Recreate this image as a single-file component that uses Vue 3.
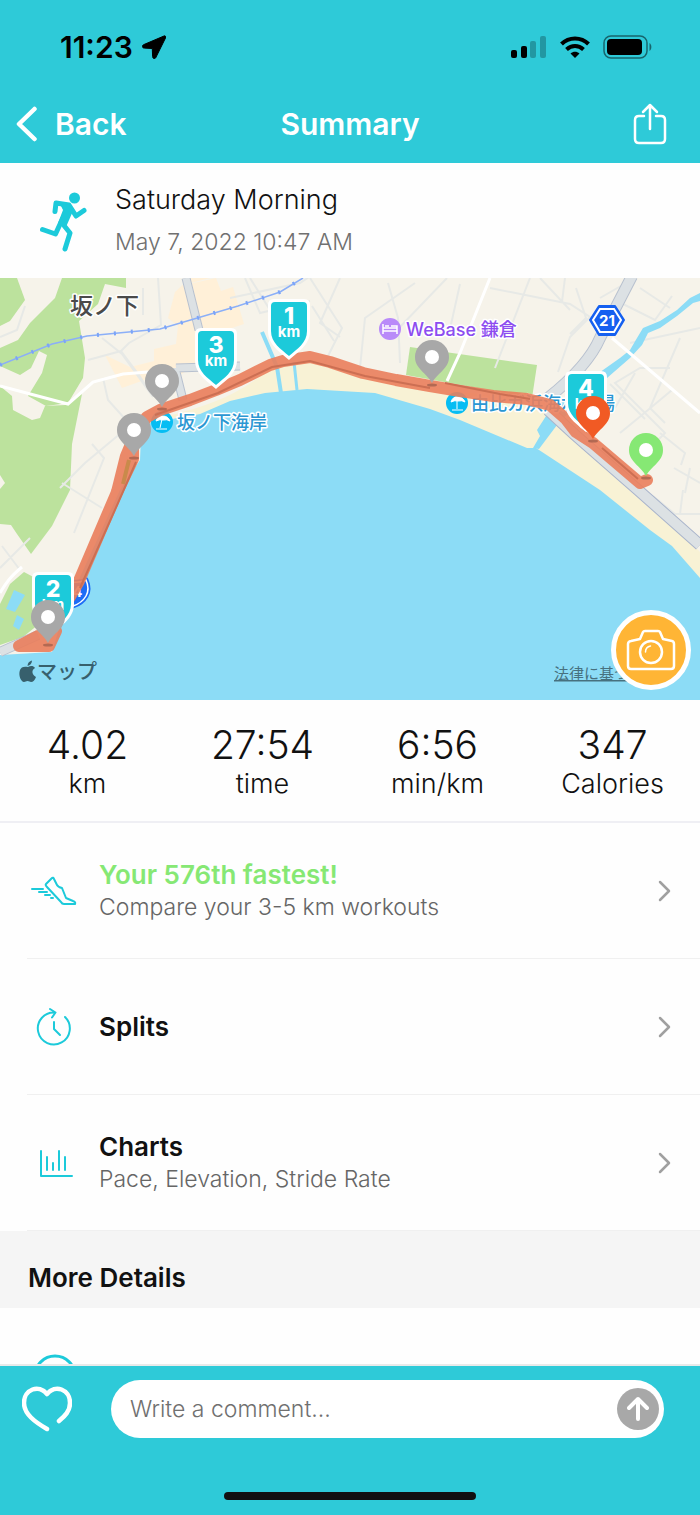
<template>
  <div class="app">
    <header class="header">
      <div class="status-bar">
        <div class="status-time">
          <span>11:23</span>
          <svg width="24" height="24" viewBox="0 0 24 24" aria-hidden="true">
            <path d="M22 1 2 9.500c-2.500 1-2 3.500.3 3.600l8 .4.3 8c.1 2.500 2.600 3 3.500.5L23.500 3c.5-1.500-.3-2.500-1.500-2z" stroke="#000" stroke-width="1" />
          </svg>
        </div>
        <div class="status-icons">
          <svg width="36" height="24" viewBox="0 0 36 24" aria-hidden="true">
            <rect x="0" y="15" width="6" height="8" rx="2" />
            <rect x="10" y="11" width="6" height="12" rx="2" />
            <rect x="19" y="6" width="6" height="17" rx="2" opacity=".25" />
            <rect x="29" y="1" width="6" height="22" rx="2" opacity=".25" />
          </svg>
          <svg width="30" height="24" viewBox="0 0 30 24" aria-hidden="true">
            <g fill="none" stroke="#000" stroke-width="4">
              <path d="M1.500 9C9 1.500 21 1.500 28.500 9" />
              <path d="M6.500 14.500c5-4.600 12-4.600 17 0" />
            </g>
            <path d="M10.500 18.500c2.800-2.300 6.200-2.300 9 0L15 23z" />
          </svg>
          <svg width="50" height="24" viewBox="0 0 50 24" aria-hidden="true">
            <rect x="1" y="1" width="43" height="22" rx="7" fill="none" stroke="#000" stroke-opacity=".5" stroke-width="1.500" />
            <rect x="4" y="4" width="35" height="16" rx="4" />
            <path d="M46.500 8c2.500 1.500 2.500 6.500 0 8z" opacity=".5" />
          </svg>
        </div>
      </div>
      <nav class="nav-bar">
        <button class="back" type="button">
          <svg width="22" height="36" viewBox="0 0 22 36" aria-hidden="true">
            <path d="M18.500 3 3 18l15.500 15" fill="none" stroke="#fff" stroke-width="4.500" stroke-linecap="round" stroke-linejoin="round" />
          </svg>
          <span>Back</span>
        </button>
        <h1>Summary</h1>
        <button class="share" type="button" aria-label="Share">
          <svg width="34" height="42" viewBox="0 0 34 42" aria-hidden="true">
            <g fill="none" stroke="#fff" stroke-width="2.500" stroke-linecap="round" stroke-linejoin="round">
              <path d="M11 13H6q-4 0-4 4v19q0 4 4 4h22q4 0 4-4V17q0-4-4-4h-5M17 26V2M10 9l7-7 7 7" />
            </g>
          </svg>
        </button>
      </nav>
    </header>

    <main class="content">
      <section class="workout">
        <svg class="runner" width="50" height="62" viewBox="0 0 50 62" aria-hidden="true">
          <circle cx="35.500" cy="8" r="5.500" fill="#1ccada" />
          <g fill="none" stroke="#1ccada" stroke-width="5" stroke-linecap="round" stroke-linejoin="round">
            <path d="M16 21.500 17 13l13 2 7 11 8-5.500" />
            <path d="m3.500 39.500 13 4.500 6-13 7-14" />
            <path d="m23 33 8 10-5 16" />
          </g>
          <path d="m21 14 9 1 4 6-7 16-8-4 5-13z" fill="#1ccada" />
        </svg>
        <div>
          <h2>Saturday Morning</h2>
          <p>May 7, 2022 10:47 AM</p>
        </div>
      </section>

      <section class="map" aria-label="Route map">
        <svg class="map-canvas" viewBox="0 0 700 422" preserveAspectRatio="xMidYMid slice">
          <rect width="700" height="422" fill="#f6f3ea" />

          <!-- built-up blocks -->
          <g fill="#fff0d8">
            <path d="m180 8 30-8h-20l-15 14-7 26 10 8-2 18-22 5v12l-24 6-25-12 17 33 28-10 27-1 20-13 30-6-7-26 24-8-11-37-12 4-5-13z" />
          </g>

          <!-- parks and hills -->
          <g fill="#bce29d">
            <path d="M0 0h17l8 22-15 21-10 5z" />
            <path d="M62 0h64v10l-21-4-7 20-19 17 6 37-2 20-15 25-22 3-18-10 14-23 5-18-8-4-8 17-11 7-20-9V70l18-8 12-17 25-25z" />
            <path d="m0 108 12 10 1 14 19 10 8-2 5-12 20-1 17-11-10 50-2 46-18 36-21 28-14-20-6-9-12-1z" />
            <path d="m0 326 10-20 14-12 15 8v44l-16 13-23 8z" />
            <path d="m410 69 127 18-5 33-126-23z" />
            <path d="m0 197 5 8-5 6z" fill="#f6f3ea" />
          </g>

          <!-- small streets -->
          <g fill="none" stroke="#e7e9e6" stroke-width="2">
            <path d="m88 82 33-9 8-8 32-18-3-47M121 73l18 24 14 22M102 60l20 16 31 43M103 100l5 22 18 20M60 210l25-25 42-35M92 166l12 14-30 75M62 205l40 25M25 28l-8 24-17 7M143 10v27M0 290l30-30M2 268l18 24M230 20l70-15 30-20M245 0l15 35 50-12M250 0l25 40 20 35M310 0l32 50-20 40M360 90l5-50 50-35M400 85l-2-45-10-35M447 0l-48 50M340 0l-20 45 20 14M312 28l22 35" />
            <path d="m490 10 80 16 20 13-20 20-12 35M530 0l-35 90M460 6l-10 45M540 0l30 32M565 0l-3 24M615 22l40 20 17-24M640 10l30 20M670 90h-30l-25 15 50 50-20 20M700 50l-70 15M680 60l-30 70 15 15M610 106l35 35M620 155l22-18 30-25M660 155l25 20-4 12M635 95l-20 35M674 190l26 15M690 190l-5 25M700 236h-25l-22-18M683 212l-3 24M576 10l10 30-16 16M600 20l35-20" />
          </g>

          <!-- main roads -->
          <g fill="none" stroke="#b8c1cf" stroke-width="9">
            <path d="m186 0 13 52M183 122l-8-32M176 90l64-2" />
            <path d="m632 -2-32 62q-12 28-52 60" stroke-width="12" />
          </g>
          <g fill="none" stroke="#dce1e4" stroke-width="7">
            <path d="m186 0 13 52M183 122l-8-32M176 90l64-2" />
            <path d="m632 -2-32 62q-12 28-52 60" stroke-width="10" />
          </g>

          <!-- beach, sea and river -->
          <path d="M168 138c40-10 72-21 102-48l38-8 52 12 60 14 60 8 65 14 22 26 85 68 48 50v32z" fill="#f8f2d5" />
          <path d="M0 377 52 374l12-40 56-122 20-30 1-25 14-18 17 2 28-5 30-13 35-8 42-4 68 4 55 16 30 11 67 28h9l64 42 50 40 22 16 28 32v122H0z" fill="#8cdcf6" />
          <path d="M700 15 690 20 677 32 660 43 643 50 637 60 630 72 620 80 603 92 548 135 537 152 540 158 533 170 539 171 560 143 607 100 630 80 642 67 648 55 660 50 677 38 693 25 700 23z" fill="#8cdcf6" />
          <g fill="none" stroke="#8cdcf6">
            <path d="m262 54 15 35 4 26" stroke-width="4" />
            <path d="m294 84 3 28" stroke-width="3" />
          </g>
          <g fill="none" stroke="#fff" stroke-width="3">
            <path d="m0 108 68 18 25-22 30-8 25-2M0 315c6-10 10-16 22-26M490 0l-30 75-13 28" />
            <path d="m612 60 88 75" />
          </g>
          <path d="m548 132 26 24 64 56 62 55" fill="none" stroke="#a9b4cb" stroke-width="12" />
          <path d="m548 132 26 24 64 56 62 55" fill="none" stroke="#dce1e4" stroke-width="10" />
          <path d="m14 312 11 5-10 17-9-3zm3 25 7 4-5 11-6-4z" fill="#8cdcf6" />
          <path d="m0 374 38-17" stroke="#b8c1cf" stroke-width="10" />
          <path d="m0 374 38-17" stroke="#dce1e4" stroke-width="8" />

          <!-- railway -->
          <path d="m0 87 52-21 35-8 73-7 78-23 42-14 23-14" fill="none" stroke="#8baff8" stroke-width="1.500" />
          <path d="m0 87 52-21 35-8 73-7 78-23 42-14 23-14" fill="none" stroke="#7ba4f8" stroke-width="4" stroke-dasharray="2 15" />

          <!-- place names -->
          <text x="70" y="36" class="label town">坂ノ下</text>
          <circle cx="162" cy="144" r="11" fill="#06bdf3" />
          <path d="m156 143q2-6 7-5 5 0 7 5-3-2-7-1-3-1-7 1zm6-2-2 9m-4 1h11" class="parasol" />
          <text x="177" y="151" class="label beach">坂ノ下海岸</text>
          <circle cx="457" cy="125" r="11" fill="#06bdf3" />
          <path d="m451 124q2-6 7-5 5 0 7 5-3-2-7-1-3-1-7 1zm6-2v9m-5 1h11" class="parasol" />
          <text x="471" y="132" class="label beach">由比ガ浜海水浴場</text>
          <circle cx="390" cy="51" r="11" fill="#b98af9" />
          <path d="M383 46v10m0-3h14v3m0-3v-3h-14m2-2h4m2 0h6v3" fill="none" stroke="#fff" stroke-width="1.500" />
          <text x="406" y="58" class="label hotel">WeBase 鎌倉</text>
          <path d="M72 304q9 1 14-2 4 9 0 16-4 7-13 10l-9-11z" fill="#1e6df6" stroke="#1e6df6" stroke-width="5" stroke-linejoin="round" />
          <path d="M72 304q9 1 14-2 4 9 0 16-4 7-13 10l-9-11z" fill="#1e6df6" stroke="#fff" stroke-width="1.500" />
          <text x="56" y="319" class="shield">134</text>
          <path d="m599 28h16l9 14-9 15h-16l-9-15z" fill="#1560f0" stroke="#1560f0" stroke-width="2" stroke-linejoin="round" />
          <path d="m600 31h14l7 11-7 12h-14l-7-12z" fill="#1560f0" stroke="#fff" stroke-width="2" />
          <text x="607" y="48" class="shield middle">21</text>

          <!-- recorded route -->
          <g opacity=".9" fill="none" stroke="#ea7e5c" stroke-width="12" stroke-linecap="round" stroke-linejoin="round">
            <path d="M50 362 60 336 79 303 117 214 126 178 137 152 147 139 160 132 190 122 216 112 240 102 270 87 283 83 310 79 330 84 363 95 396 102 430 108 460 113 493 118 527 121 550 127 566 141 576 154 593 165 640 205 647 202" />
            <path d="M133 166v15l-16 33" />
            <path d="M19 368 38 358 56 353 49 368z" fill="#ea7e5c" />
          </g>
          <g fill="none" stroke="#cc6f53" stroke-width="2">
            <path d="M80 310 118 225 136 184M155 137 218 115 272 89 310 83 365 98 430 110M445 105 500 116 530 121M602 170 638 201" />
            <path d="m123 206 6-24" stroke="#c98a4b" stroke-width="4" />
          </g>

          <g v-for="badge in badges" :key="badge.km" :transform="`translate(${badge.x} ${badge.y})`">
            <path d="M-15 0h30q6 0 6 6v26C21 46 9 53 0 61-9 53-21 46-21 32V6q0-6 6-6z" fill="#fff" />
            <path d="M-14 3h28q4 0 4 4v25C18 44 8 50 0 57c-8-7-18-13-18-25V7q0-4 4-4z" fill="#1ccada" />
            <text y="25" class="km-number">{{ badge.km }}</text>
            <text y="38" class="km-unit">km</text>
          </g>

          <g v-for="pin in pins" :key="pin.id" :transform="`translate(${pin.x} ${pin.y})`">
            <ellipse cy="28" rx="5" ry="1.500" fill="#8d5443" opacity=".6" />
            <path d="M0 26C-5 16-17 12-17 0a17 17 0 0 1 34 0C17 12 5 16 0 26z" :fill="pin.color" />
            <circle r="7" fill="#fff" />
          </g>

          <!-- map credits -->
          <g fill="#37606d">
            <path d="M28 389c2-1 5-2 7 1-4 2-3 7 1 9-1 3-3 5-5 5-1 0-2-1-3.500-1s-2 1-3.500 1c-3 0-6-7-4-12 1-3 4-4 8-3z" />
            <path d="M27.500 388c0-3 2-5 4.500-5.500 0 3-2 5-4.500 5.500z" />
            <text x="37" y="401" class="credit">マップ</text>
          </g>
          <text x="554" y="401" class="legal">法律に基づく</text>
        </svg>
        <button class="camera" type="button" aria-label="Add photo">
          <svg width="50" height="42" viewBox="0 0 50 42" aria-hidden="true">
            <g fill="none" stroke="#fff" stroke-width="2.500" stroke-linejoin="round">
              <path d="M14 10 17 3q.5-1 2-1h13q1.500 0 2 1l3 7 9 2q2 .5 2 3v22q0 3-3 3H5q-3 0-3-3V15q0-2.500 3-3z" />
              <circle cx="25" cy="23" r="11" />
              <path d="M19.500 23q0-5 5-6" stroke-width="1.500" stroke-linecap="round" />
            </g>
          </svg>
        </button>
      </section>

      <dl class="stats">
        <div v-for="stat in stats" :key="stat.label">
          <dd>{{ stat.value }}</dd>
          <dt>{{ stat.label }}</dt>
        </div>
      </dl>

      <div class="rows">
        <button v-for="row in rows" :key="row.icon" class="row" type="button">
          <span class="row-inner">
            <svg class="row-icon" width="50" height="42" viewBox="0 0 50 42" aria-hidden="true">
              <g v-if="row.icon === 'shoe'">
                <path d="m17 14 6-6q1-1 2 1l3 6q1 2 5 3l4 10 7 3q3 1 2 3H35q-2 0-3-2L18 17q-2-2-1-3z" />
                <path d="M3 19h11M10 22h8M16 25h5M22 28h2" />
              </g>
              <g v-else-if="row.icon === 'clock'">
                <path d="M36 11A16 16 0 1 1 26 6.500M21 3l5.500 3.500-3.500 5" />
                <path d="M25 16v7l6 6" />
              </g>
              <g v-else>
                <path d="M12 9v25h31M18 15v13M24 21v7M30 9v19M36 15v13" />
              </g>
            </svg>
            <span class="row-text">
              <span class="row-title" :class="{ highlight: row.highlight }">{{ row.title }}</span>
              <span v-if="row.subtitle" class="row-subtitle">{{ row.subtitle }}</span>
            </span>
            <svg width="14" height="22" viewBox="0 0 14 22" aria-hidden="true">
              <path d="m2 2 9 9-9 9" fill="none" stroke="#a0a0a0" stroke-width="2.500" stroke-linecap="round" stroke-linejoin="round" />
            </svg>
          </span>
        </button>
      </div>

      <h3 class="section-title">More Details</h3>
      <div class="detail">
        <svg width="44" height="44" viewBox="0 0 44 44" aria-hidden="true">
          <circle cx="22" cy="22" r="20" fill="none" stroke="#1ccada" stroke-width="3" />
        </svg>
      </div>
    </main>

    <footer class="footer">
      <form class="comment-form" @submit.prevent="comment = ''">
        <button class="like" type="button" aria-label="Like">
          <svg width="50" height="46" viewBox="0 0 50 46" aria-hidden="true">
            <path d="M25 43C13 36 2 28 2 17 2 3 17-2 25 8c8-10 23-5 23 9 0 8-5 13-11 18" fill="none" stroke="#fff" stroke-width="4.500" stroke-linecap="round" stroke-linejoin="round" />
          </svg>
        </button>
        <div class="comment-box">
          <input v-model="comment" type="text" placeholder="Write a comment..." aria-label="Write a comment" />
          <button class="send" type="submit" aria-label="Send">
            <svg width="22" height="26" viewBox="0 0 22 26" aria-hidden="true">
              <path d="M11 23V3M2 12l9-9 9 9" fill="none" stroke="#fff" stroke-width="4" stroke-linecap="round" stroke-linejoin="round" />
            </svg>
          </button>
        </div>
      </form>
      <div class="home-indicator"></div>
    </footer>
  </div>
</template>

<script setup>
import { ref } from 'vue'

const comment = ref('')

const badges = [
  { km: 1, x: 289, y: 21 },
  { km: 3, x: 216, y: 50 },
  { km: 4, x: 586, y: 93 },
  { km: 2, x: 53, y: 294 },
]

const pins = [
  { id: 'a', x: 162, y: 103, color: '#a8a8a8' },
  { id: 'b', x: 134, y: 152, color: '#a8a8a8' },
  { id: 'c', x: 432, y: 79, color: '#a8a8a8' },
  { id: 'd', x: 48, y: 339, color: '#a8a8a8' },
  { id: 'finish', x: 593, y: 135, color: '#f15a24' },
  { id: 'start', x: 646, y: 172, color: '#86e874' },
]

const stats = [
  { value: '4.02', label: 'km' },
  { value: '27:54', label: 'time' },
  { value: '6:56', label: 'min/km' },
  { value: '347', label: 'Calories' },
]

const rows = [
  { icon: 'shoe', title: 'Your 576th fastest!', subtitle: 'Compare your 3-5 km workouts', highlight: true },
  { icon: 'clock', title: 'Splits' },
  { icon: 'chart', title: 'Charts', subtitle: 'Pace, Elevation, Stride Rate' },
]
</script>

<style>
body {
  margin: 0;
}
</style>

<style scoped>
.app {
  display: flex;
  flex-direction: column;
  height: 100vh;
  background: #fefefe;
  color: #111;
  font-family: Inter, 'Noto Sans CJK JP', sans-serif;
}

button {
  padding: 0;
  border: none;
  background: none;
  color: inherit;
  font: inherit;
  cursor: pointer;
}

svg {
  display: block;
  flex: none;
}

h1,
h2,
h3,
p,
dl,
dd {
  margin: 0;
}

/* header */
.header {
  background: #2ecad8;
}

.status-bar {
  display: flex;
  justify-content: space-between;
  align-items: center;
  height: 84px;
  padding: 9px 47px 0 60px;
  box-sizing: border-box;
  color: #000;
}

.status-time,
.status-icons {
  display: flex;
  align-items: center;
}

.status-time {
  gap: 9px;
  font-size: 30px;
  font-weight: 600;
}

.status-icons {
  gap: 13px;
}

.nav-bar {
  display: grid;
  grid-template-columns: 1fr auto 1fr;
  align-items: center;
  height: 79px;
  padding: 0 16px;
  color: #fff;
}

.nav-bar h1 {
  font-size: 30px;
  font-weight: 600;
}

.back {
  display: flex;
  align-items: center;
  justify-self: start;
  gap: 17px;
  font-size: 30px;
  font-weight: 600;
}

.share {
  justify-self: end;
  margin-right: 17px;
}

/* content */
.content {
  flex: 1;
  min-height: 0;
  overflow-y: auto;
  scrollbar-width: none;
}

.workout {
  display: flex;
  align-items: center;
  gap: 26px;
  height: 115px;
  padding-left: 39px;
}

.workout h2 {
  font-size: 27px;
  font-weight: 300;
  line-height: 42px;
}

.workout p {
  color: #707070;
  font-size: 23px;
  font-weight: 300;
  line-height: 42px;
}

/* map */
.map {
  position: relative;
}

.map-canvas {
  width: 100%;
  height: auto;
}

.label {
  paint-order: stroke;
  stroke: #fff;
  stroke-width: 3px;
  stroke-linejoin: round;
}

.town {
  fill: #4a4a4a;
  font-size: 23px;
  font-weight: 500;
}

.beach {
  fill: #2b97d3;
  font-size: 18px;
  font-weight: 500;
}

.hotel {
  fill: #8d4df0;
  font-size: 18px;
  font-weight: 500;
}

.parasol {
  fill: #fff;
  stroke: #fff;
  stroke-width: 1px;
}

.shield {
  fill: #fff;
  font-size: 15px;
  font-weight: 700;
}

.middle,
.km-number,
.km-unit {
  text-anchor: middle;
}

.km-number {
  fill: #fff;
  font-size: 23px;
  font-weight: 800;
}

.km-unit {
  fill: #fff;
  font-size: 15px;
  font-weight: 700;
}

.credit {
  font-size: 20px;
  font-weight: 500;
}

.legal {
  fill: #47717f;
  font-size: 15px;
  text-decoration: underline;
}

.camera {
  position: absolute;
  right: 9px;
  bottom: 10px;
  display: grid;
  place-items: center;
  width: 80px;
  height: 80px;
  border: 5px solid #fff;
  border-radius: 50%;
  background: #ffb535;
}

/* stats */
.stats {
  display: grid;
  grid-template-columns: repeat(4, 1fr);
  height: 123px;
  padding-top: 22px;
  box-sizing: border-box;
  border-bottom: 2px solid #efeff4;
  text-align: center;
}

.stats dd {
  font-size: 39px;
  font-weight: 300;
  line-height: 46px;
}

.stats dt {
  font-size: 27px;
  font-weight: 300;
  line-height: 32px;
}

/* rows */
.row {
  display: block;
  width: 100%;
  padding-left: 27px;
  text-align: left;
}

.row-inner {
  display: flex;
  align-items: center;
  height: 136px;
  padding: 0 28px 0 2px;
  box-sizing: border-box;
  border-bottom: 1px solid #f0f0f0;
}

.row-icon {
  margin-right: 20px;
  fill: none;
  stroke: #1ccada;
  stroke-width: 2;
  stroke-linecap: round;
  stroke-linejoin: round;
}

.row-text {
  display: flex;
  flex: 1;
  flex-direction: column;
}

.row-title {
  font-size: 26px;
  font-weight: 600;
  line-height: 32px;
}

.highlight {
  color: #86e874;
}

.row-subtitle {
  color: #666;
  font-size: 23px;
  font-weight: 300;
  line-height: 32px;
}

.section-title {
  padding: 30px 28px 13px;
  background: #f5f5f5;
  font-size: 26px;
  font-weight: 600;
  line-height: 34px;
}

.detail {
  height: 136px;
  padding: 46px 33px 0;
  box-sizing: border-box;
}

/* footer */
.footer {
  border-top: 2px solid #e8eaea;
  background: #2ecad8;
}

.comment-form {
  display: flex;
  align-items: center;
  gap: 39px;
  padding: 14px 36px 0 22px;
}

.comment-box {
  display: flex;
  flex: 1;
  align-items: center;
  height: 58px;
  padding: 0 5px 0 19px;
  box-sizing: border-box;
  border-radius: 29px;
  background: #fff;
}

.comment-box input {
  flex: 1;
  min-width: 0;
  padding: 0;
  border: none;
  outline: none;
  background: none;
  color: #111;
  font: inherit;
  font-size: 23px;
  font-weight: 300;
}

.comment-box input::placeholder {
  color: #707070;
  opacity: 1;
}

.send {
  display: grid;
  place-items: center;
  width: 42px;
  height: 42px;
  border-radius: 50%;
  background: #a8a8a8;
}

.home-indicator {
  width: 36%;
  height: 8px;
  margin: 54px auto 15px;
  border-radius: 4px;
  background: #111;
}
</style>
